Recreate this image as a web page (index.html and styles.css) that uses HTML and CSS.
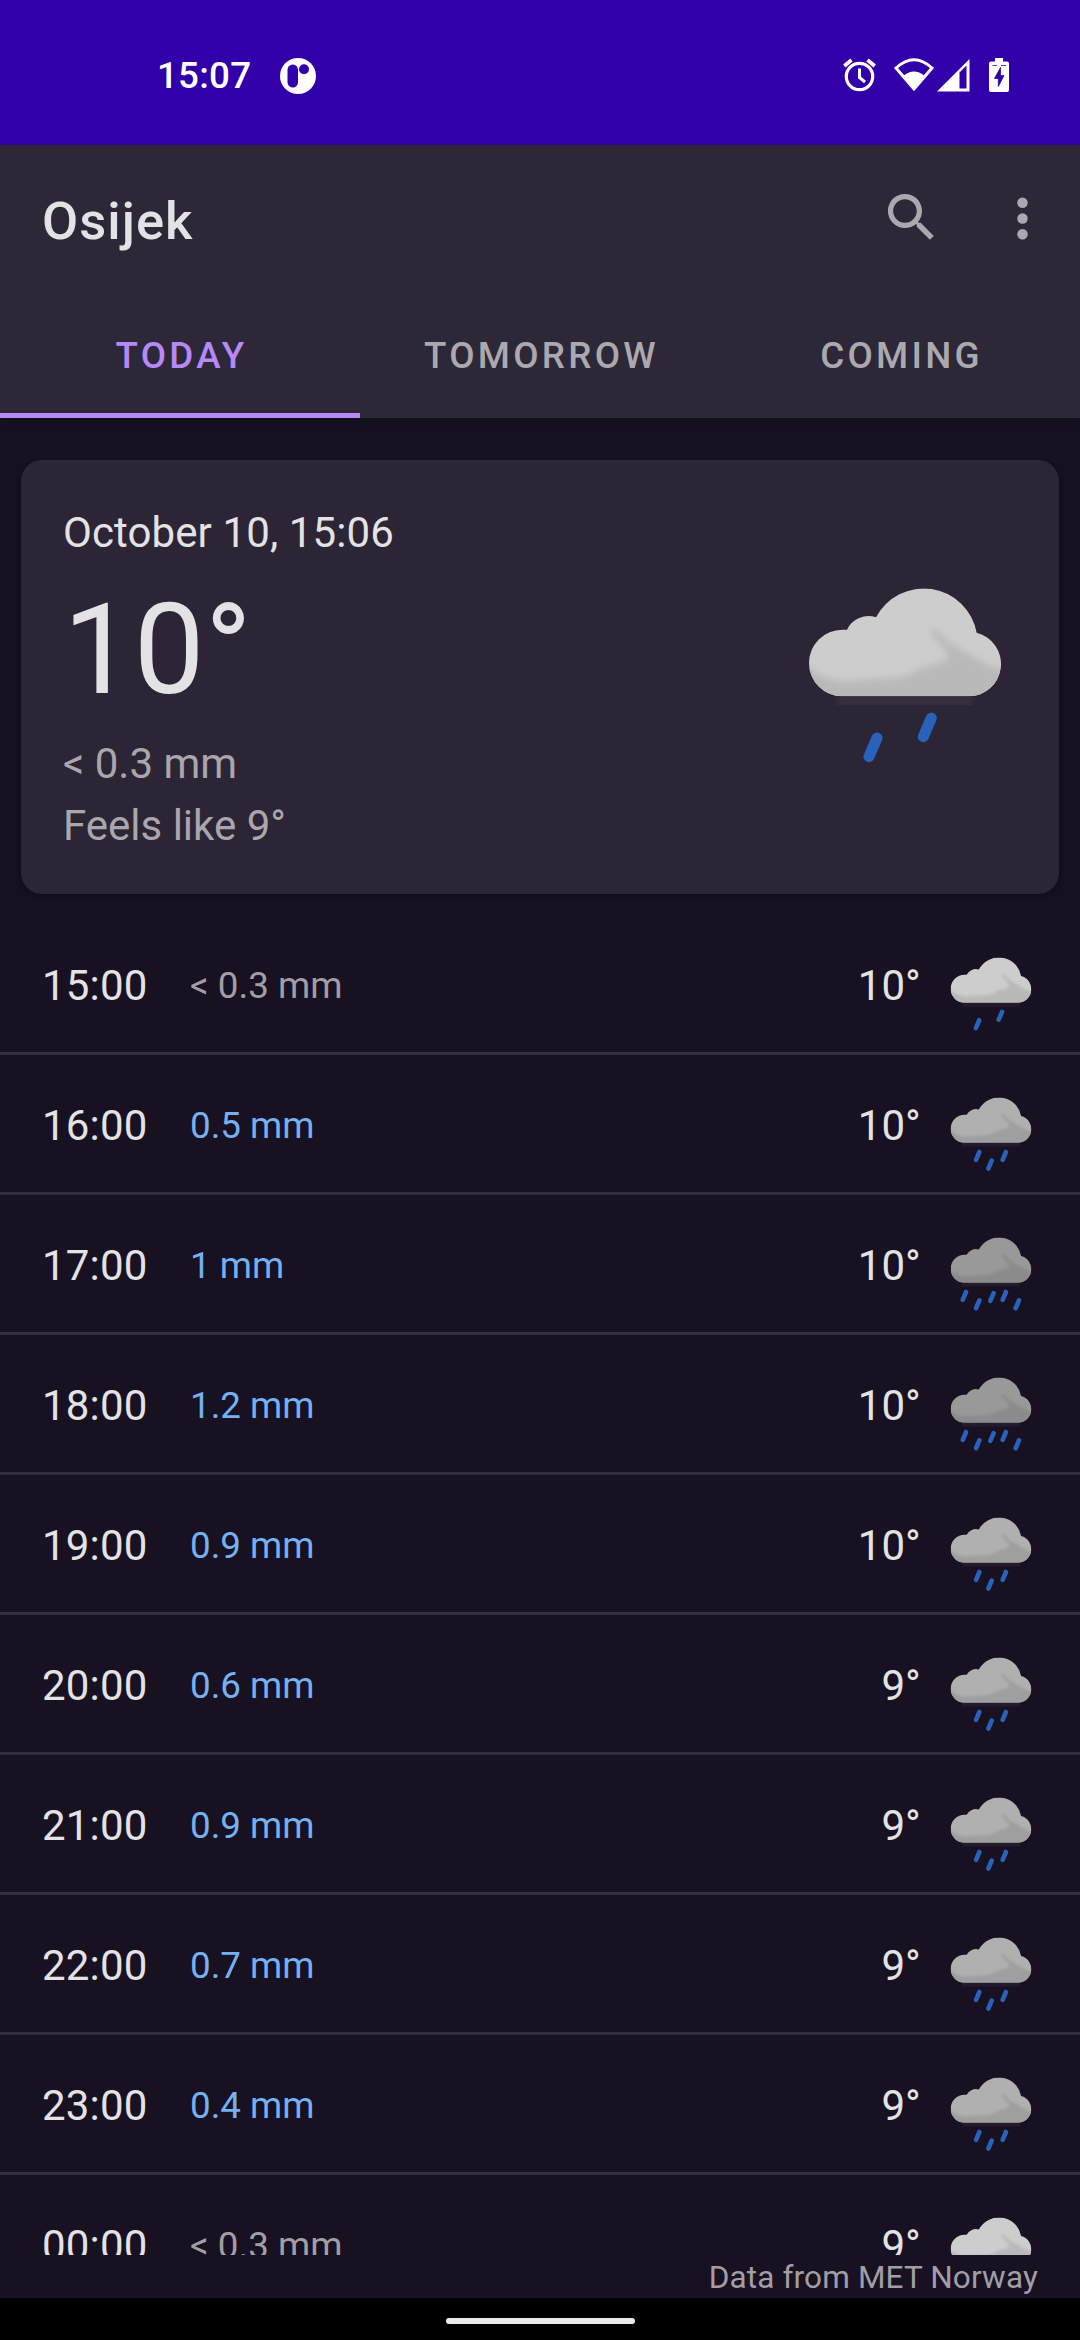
FILE: index.html
```html
<!DOCTYPE html>
<html lang="en">
<head>
<meta charset="utf-8">
<title>Osijek</title>
<link rel="stylesheet" href="styles.css">
</head>
<body>
<svg class="defs" aria-hidden="true">
  <defs>
    <filter id="soft" x="-10%" y="-20%" width="120%" height="140%"><feGaussianBlur stdDeviation="11"/></filter>
    <clipPath id="cloud-clip"><path d="M187 409A100 100 0 0 1 187 209H201A72 72 0 0 1 288 172A161.500 161.500 0 0 1 590 218A97 97 0 0 1 567 409Z"/></clipPath>
    <linearGradient id="under"><stop offset="0" stop-color="#fff" stop-opacity="0"/><stop offset=".05" stop-color="#fff"/><stop offset=".95" stop-color="#fff"/><stop offset="1" stop-color="#fff" stop-opacity="0"/></linearGradient>
    <path id="drop" d="M12 -28L-12 28"/>
    <g id="cloud">
      <rect x="160" y="409" width="430" height="27" fill="url(#under)" opacity=".045"/>
      <g clip-path="url(#cloud-clip)">
        <rect class="cloud-base" x="80" y="78" width="590" height="335"/>
        <path class="cloud-shade" filter="url(#soft)" d="M60 300C120 360 180 370 260 358C330 355 380 355 410 330C440 312 500 315 503 288C500 255 440 225 452 206C470 200 490 240 540 266C590 294 620 320 690 335V440H60Z"/>
      </g>
    </g>
    <symbol id="light-rain" viewBox="75 75 600 600">
      <use href="#cloud"/>
      <g class="drops"><use href="#drop" x="279" y="562"/><use href="#drop" x="442" y="502"/></g>
    </symbol>
    <symbol id="rain" viewBox="75 75 600 600">
      <use href="#cloud"/>
      <g class="drops"><use href="#drop" x="280" y="503"/><use href="#drop" x="368" y="565"/><use href="#drop" x="470" y="503"/></g>
    </symbol>
    <symbol id="heavy-rain" viewBox="75 75 600 600">
      <use href="#cloud"/>
      <g class="drops"><use href="#drop" x="185" y="503"/><use href="#drop" x="280" y="563"/><use href="#drop" x="382" y="511"/><use href="#drop" x="470" y="503"/><use href="#drop" x="563" y="563"/></g>
    </symbol>
  </defs>
</svg>
<div class="screen">
  <div class="status-bar">
    <span class="clock">15:07</span>
    <svg class="notification" viewBox="0 0 36 36"><circle cx="18" cy="18" r="18" fill="#fff"/><rect x="7.5" y="6.5" width="10.5" height="23" rx="5.2" fill="#3200a8"/><circle cx="24" cy="11.3" r="5" fill="#3200a8"/></svg>
    <div class="status-icons">
      <svg class="alarm" viewBox="0 0 33 34" fill="none" stroke="#fff"><circle cx="16.5" cy="18.5" r="13.2" stroke-width="3.2"/><path d="M16.5 10.5v9l5.5 4.5" stroke-width="3"/><path d="M1.3 8L8.5 2M31.7 8L24.5 2" stroke-width="3.6"/></svg>
      <svg class="wifi" viewBox="0 0 40 34"><path d="M2 10Q20 -6.5 38 10L20 31Z" fill="none" stroke="#fff" stroke-width="3"/><path d="M9.8 17.5Q20 9.5 30.2 17.5L20 32Z" fill="#fff"/></svg>
      <svg class="signal" viewBox="0 0 33 34"><path d="M0 33.500L32.500 1V33.500Z" fill="#fff"/><path d="M22.500 14.500L29.500 7.500V30.500H22.500Z" fill="#3200a8"/></svg>
      <svg class="battery" viewBox="0 0 20 34"><path d="M6 0h8v3.500h4a2 2 0 0 1 2 2V32a2 2 0 0 1-2 2H2a2 2 0 0 1-2-2V5.500a2 2 0 0 1 2-2h4Z" fill="#fff"/><path d="M3.500 7.500H8M12 7.500h5M11.500 9.500L5.500 20.500H9.300V28.500L15 17.500H11.500Z" fill="#3200a8" stroke="#3200a8" stroke-width=".8"/></svg>
    </div>
  </div>

  <header class="app-bar">
    <div class="toolbar">
      <h1 class="title">Osijek</h1>
      <svg class="action search" viewBox="0 0 24 24"><path d="M15.500 14h-.79l-.28-.27A6.471 6.471 0 0 0 16 9.500 6.500 6.500 0 1 0 9.500 16c1.610 0 3.090-.59 4.230-1.570l.27.28v.79l5 4.990L20.490 19l-4.990-5zm-6 0C7.010 14 5 11.990 5 9.500S7.010 5 9.500 5 14 7.010 14 9.500 11.990 14 9.500 14z"/></svg>
      <svg class="action" viewBox="0 0 24 24"><circle cx="12" cy="6" r="2"/><circle cx="12" cy="12" r="2"/><circle cx="12" cy="18" r="2"/></svg>
    </div>
    <nav class="tabs">
      <div class="tab active">TODAY</div>
      <div class="tab">TOMORROW</div>
      <div class="tab">COMING</div>
    </nav>
  </header>

  <main class="content">
    <section class="card">
      <div class="now">
        <div class="date">October 10, 15:06</div>
        <div class="now-temp">10°</div>
        <div class="detail">&lt; 0.3 mm</div>
        <div class="detail">Feels like 9°</div>
      </div>
      <svg class="now-icon light"><use href="#light-rain"/></svg>
    </section>
    <div class="hours">
      <div class="hour"><span class="time">15:00</span><span class="amount trace">&lt; 0.3 mm</span><span class="temp">10°</span><svg class="icon light"><use href="#light-rain"/></svg></div>
      <div class="hour"><span class="time">16:00</span><span class="amount">0.5 mm</span><span class="temp">10°</span><svg class="icon medium"><use href="#rain"/></svg></div>
      <div class="hour"><span class="time">17:00</span><span class="amount">1 mm</span><span class="temp">10°</span><svg class="icon dark"><use href="#heavy-rain"/></svg></div>
      <div class="hour"><span class="time">18:00</span><span class="amount">1.2 mm</span><span class="temp">10°</span><svg class="icon dark"><use href="#heavy-rain"/></svg></div>
      <div class="hour"><span class="time">19:00</span><span class="amount">0.9 mm</span><span class="temp">10°</span><svg class="icon medium"><use href="#rain"/></svg></div>
      <div class="hour"><span class="time">20:00</span><span class="amount">0.6 mm</span><span class="temp">9°</span><svg class="icon medium"><use href="#rain"/></svg></div>
      <div class="hour"><span class="time">21:00</span><span class="amount">0.9 mm</span><span class="temp">9°</span><svg class="icon medium"><use href="#rain"/></svg></div>
      <div class="hour"><span class="time">22:00</span><span class="amount">0.7 mm</span><span class="temp">9°</span><svg class="icon medium"><use href="#rain"/></svg></div>
      <div class="hour"><span class="time">23:00</span><span class="amount">0.4 mm</span><span class="temp">9°</span><svg class="icon medium"><use href="#rain"/></svg></div>
      <div class="hour"><span class="time">00:00</span><span class="amount trace">&lt; 0.3 mm</span><span class="temp">9°</span><svg class="icon light"><use href="#light-rain"/></svg></div>
    </div>
  </main>
  <footer class="credit">Data from MET Norway</footer>
  <div class="nav-bar"><div class="home-handle"></div></div>
</div>
</body>
</html>
```
FILE: styles.css
```css
* { box-sizing: border-box; }
body { margin: 0; background: #000; font-family: Roboto, "Noto Sans", sans-serif; color: #e3e2e4; }
svg { display: block; flex: none; }
.defs { position: absolute; width: 0; height: 0; }
.screen { width: 1080px; height: 2340px; overflow: hidden; display: flex; flex-direction: column; background: #181122; }

.status-bar { height: 145px; flex: none; display: flex; align-items: flex-start; padding: 58px 71px 0 157px; background: #3200a8; color: #fff; }
.clock { width: 123px; font-size: 36.75px; font-weight: 500; line-height: 36px; letter-spacing: .2px; }
.notification { width: 36px; height: 36px; }
.status-icons { display: flex; margin-left: auto; }
.alarm { width: 33px; height: 34px; }
.wifi { width: 40px; height: 34px; margin-left: 18px; }
.signal { width: 33px; height: 34px; margin-left: 3px; }
.battery { width: 20px; height: 34px; margin-left: 19px; }

.app-bar { height: 273px; flex: none; background: #2d2837; box-shadow: 0 4px 8px rgba(12, 16, 26, .7); clip-path: inset(0 0 -20px 0); }
.toolbar { height: 147px; display: flex; align-items: center; gap: 48px; padding: 0 26px 0 42px; }
.title { margin: 4px auto 0 0; font-size: 52.5px; line-height: 62px; font-weight: 500; letter-spacing: 1.05px; }
.action { width: 63px; height: 63px; fill: #aba9af; }
.search { margin-top: -2px; }
.tabs { height: 126px; display: grid; grid-template-columns: repeat(3, 1fr); }
.tab { display: flex; align-items: center; justify-content: center; padding: 6px 0 0 3px; font-size: 36.75px; font-weight: 500; letter-spacing: 3.28px; color: #aba9af; border-bottom: 5px solid transparent; }
.tab.active { color: #b788f7; border-bottom-color: #b788f7; }

.content { height: 1837px; flex: none; overflow: hidden; padding-top: 42px; }
.card { height: 434px; margin: 0 21px 21px; padding: 42px 54px 0 42px; display: flex; justify-content: space-between; border-radius: 21px; background: #2c2535; box-shadow: 0 2px 8px rgba(8, 6, 16, .55); }
.date { font-size: 42px; line-height: 62px; letter-spacing: .1px; }
.now-temp { font-size: 126px; line-height: 148px; margin: 12px 0 9px; }
.detail { font-size: 42px; line-height: 62px; color: #a9a6ae; }
.now-icon { width: 200px; height: 200px; margin-top: 83px; }

.hour { height: 140px; display: flex; align-items: center; padding: 3px 47.300px 0 42px; border-bottom: 3px solid #322d3d; }
.time { width: 148px; font-size: 42px; letter-spacing: .2px; }
.amount { font-size: 36.75px; color: #74b0f2; }
.trace { color: #a19ea5; }
.temp { margin-left: auto; font-size: 42px; }
.icon { width: 84px; height: 84px; margin: 26px 0 0 28px; }

.light { --base: #cdcdcd; --shade: #b9b9b9; }
.medium { --base: #b0b0b0; --shade: #9f9f9f; }
.dark { --base: #999; --shade: #8b8b8b; }
.cloud-base { fill: var(--base); }
.cloud-shade { fill: var(--shade); }
.drops { stroke: #2962bb; stroke-width: 33; stroke-linecap: round; }

.credit { height: 43px; flex: none; padding: 1px 42px 0 0; text-align: right; font-size: 31.500px; line-height: 43px; letter-spacing: .15px; color: #a19ea5; }
.nav-bar { height: 42px; flex: none; display: flex; justify-content: center; padding-top: 20px; background: #000; }
.home-handle { width: 189px; height: 6px; border-radius: 3px; background: #ebebeb; }
```
